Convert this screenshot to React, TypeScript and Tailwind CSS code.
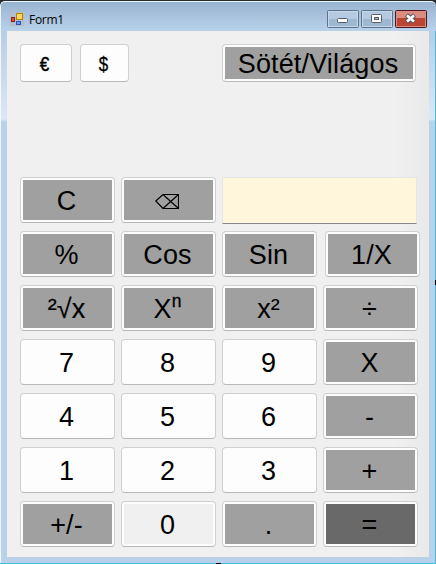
import type { ReactNode } from "react";

type Tone = "gray" | "white" | "light" | "dark";

const tones: Record<Tone, string> = {
  gray: "bg-[#a0a0a0]",
  white: "bg-[#fdfdfd]",
  light: "bg-[#f0f0f0]",
  dark: "bg-[#696969]",
};

interface KeyProps {
  label: ReactNode;
  tone?: Tone;
  size?: string;
  text?: string;
}

function Key({ label, tone = "gray", size = "h-[46px] w-[95px]", text = "text-[27px] tracking-[0.1px]" }: KeyProps) {
  return (
    <button className={`block shrink-0 rounded-[4px] border border-[#d0d0d0] border-b-[#b8b8b8] bg-[#fdfdfd] p-[2px] leading-none text-black ${size}`}>
      <span className={`flex h-full w-full items-center justify-center whitespace-pre pr-[2px] pt-[2px] ${tones[tone]} ${text}`}>{label}</span>
    </button>
  );
}

function Backspace() {
  return (
    <svg className="mr-[1px]" width="24" height="16" viewBox="0 0 24 16" fill="none" stroke="#000" strokeWidth="1.2">
      <path d="M.8 8 8 1.5h15.5v14H8ZM8.5 2 23.5 15.5M23.5 1.5 8.5 15" />
    </svg>
  );
}

const power = (
  <span className="flex items-center">
    X<span className="-mt-[15px] text-[17.5px] leading-none [-webkit-text-stroke:0.3px_black]">n</span>
  </span>
);

const root = (
  <span className="[-webkit-text-stroke:0.2px_black]">²√x</span>
);

const rows: [ReactNode, Tone][][] = [
  [["%", "gray"], ["Cos", "gray"], ["Sin", "gray"], ["1/X", "gray"]],
  [[root, "gray"], [power, "gray"], ["x²", "gray"], ["÷", "gray"]],
  [["7", "white"], ["8", "white"], ["9", "white"], ["X", "gray"]],
  [["4", "white"], ["5", "white"], ["6", "white"], ["-", "gray"]],
  [["1", "white"], ["2", "white"], ["3", "white"], ["+", "gray"]],
  [["+/-", "gray"], ["0", "light"], [".", "gray"], ["=", "dark"]],
];

function FormIcon() {
  return (
    <svg width="14" height="14" viewBox="0 0 14 14">
      <rect x="0.5" y="0.5" width="13" height="13" fill="#aec0d5" stroke="#b8babd" />
      <rect x="6.5" y="1.5" width="6" height="6" fill="#fbd75a" stroke="#b48408" />
      <rect x="1.5" y="5.5" width="3" height="4" fill="#d45542" stroke="#8c1c16" />
      <rect x="6.5" y="9.5" width="4" height="3" fill="#679eee" stroke="#2855b0" />
    </svg>
  );
}

function CaptionFrame() {
  return (
    <>
      <rect x="0.5" y="0.5" width="31" height="17" rx="1" fill="#b5cae1" stroke="#5d728b" />
      <path d="M1 9h30v8H1z" fill="#9fb8d2" />
      <rect x="1.5" y="1.5" width="29" height="15" fill="none" stroke="#c5d7ea" />
    </>
  );
}

export default function App() {
  return (
    <div className="relative flex h-[564px] w-[436px] flex-col bg-[#3bbfdc] pb-px pr-px font-['Liberation_Sans',Arial,sans-serif]">
      <div className="flex grow flex-col border-l border-[#f4f8fc] bg-[linear-gradient(180deg,#99b4d1_0px,#b7cde6_31px,#dbe8f6_119px,#b9d1ea_122px,#b9d1ea_100%)] px-[6px]">
        <header className="-mx-[7px] flex h-[31px] w-[436px] shrink-0 items-start border-t border-t-[#262b32] bg-[#262b32]">
          <div className="flex h-[30px] w-full items-start rounded-t-[5px] border-l border-t border-[#eef4fa] bg-linear-to-b from-[#99b4d1] to-[#b9d1ea] pl-[9px] pr-[9px]">
            <div className="mt-[10px]"><FormIcon /></div>
            <span className="ml-[5px] mt-[9px] font-['Open_Sans',sans-serif] text-[12px] leading-[18px] tracking-[-0.3px] text-black">Form1</span>
            <div className="ml-auto mt-[8px] flex gap-[2px]">
              <svg width="32" height="18" viewBox="0 0 32 18">
                <CaptionFrame />
                <rect x="10.5" y="8.5" width="10" height="4" rx="1" fill="#fff" stroke="#555b68" />
              </svg>
              <svg width="32" height="18" viewBox="0 0 32 18">
                <CaptionFrame />
                <rect x="10.5" y="4.5" width="10" height="8" rx="1" fill="#fff" stroke="#555b68" />
                <rect x="13.5" y="7.5" width="4" height="2" fill="#9fb8d2" stroke="#555b68" />
              </svg>
              <svg width="32" height="18" viewBox="0 0 32 18">
                <rect x="0.5" y="0.5" width="31" height="17" rx="1" fill="#d98c7f" stroke="#4d1721" />
                <path d="M1 8h30v9H1z" fill="#bb4432" />
                <rect x="1.5" y="1.5" width="29" height="15" fill="none" stroke="#d98c7f" />
                <path d="m11.5 5 8 7M19.5 5l-8 7" stroke="#555866" strokeWidth="4.6" />
                <path d="m12 5.5 7 6M19 5.5l-7 6" stroke="#fff" strokeWidth="2.6" />
              </svg>
            </div>
          </div>
        </header>
        <main className="h-[526px] w-[422px] bg-[linear-gradient(90deg,#f0f0f0_0%,#f0f0f0_92%,#e9e9e9_100%)] pl-[13px] pt-[13px]">
          <div className="flex h-[38px]">
            <Key label={<span className="scale-x-[0.85] [-webkit-text-stroke:0.5px_black]">€</span>} tone="white" size="h-[38px] w-[52px]" text="text-[20px]" />
            <div className="w-2" />
            <Key label={<span className="scale-x-[0.85] [-webkit-text-stroke:0.3px_black]">$</span>} tone="white" size="h-[38px] w-[49px]" text="text-[20px]" />
            <div className="w-[93px]" />
            <Key label="Sötét/Világos" size="h-[38px] w-[194px]" text="text-[27px] tracking-[0.15px]" />
          </div>
          <div className="mt-[95px] flex h-[46px] gap-[6px]">
            <Key label="C" />
            <Key label={<Backspace />} />
            <div className="h-[47px] w-[195px] border border-[#e6e6e9] border-b-[#87888c] bg-[#fff6dc]" />
          </div>
          <div className="mt-2 flex flex-col gap-2">
            {rows.map((row, r) => (
              <div key={r} className="flex gap-[6px]">
                {row.map(([label, tone], c) => (
                  <div key={c} className={r === 0 && c === 3 ? "ml-[2px]" : ""}>
                    <Key label={label} tone={tone} />
                  </div>
                ))}
              </div>
            ))}
          </div>
        </main>
      </div>
      <span className="absolute right-0 top-[280px] h-[5px] w-px bg-black" />
      <span className="absolute bottom-0 left-[216px] h-px w-[5px] bg-black" />
    </div>
  );
}
